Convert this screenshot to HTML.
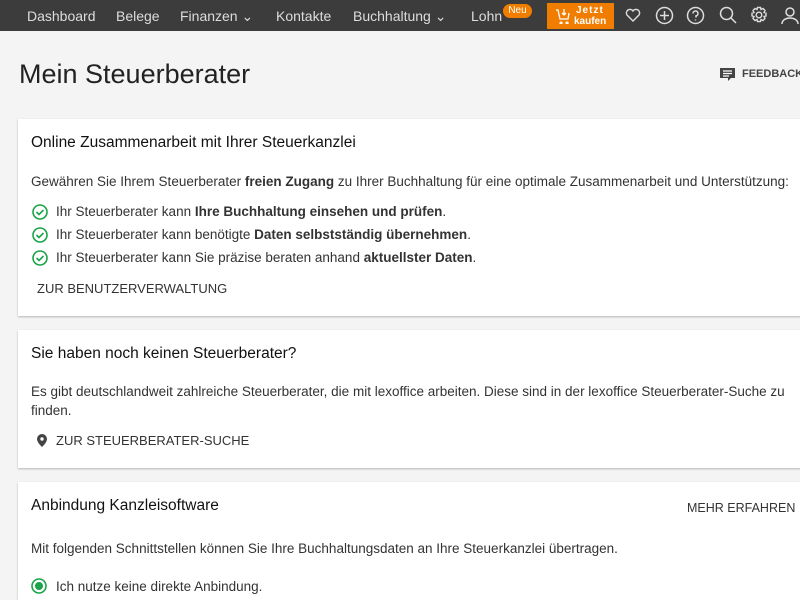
<!DOCTYPE html>
<html><head><meta charset="utf-8"><style>
*{margin:0;padding:0;box-sizing:border-box}
html,body{width:800px;height:600px;overflow:hidden}
body{background:#f4f4f4;font-family:"Liberation Sans",sans-serif;color:#222;position:relative}
.nav{position:absolute;top:0;left:0;width:800px;height:31px;background:#3c3c3c;color:#ddd;font-size:14px}
.nav span{position:absolute;top:8px}
.buy{position:absolute;left:547px;top:3px;width:67px;height:26px;background:#f07d00;color:#fff;font-weight:bold;font-size:10px;line-height:10px}
.neu{position:absolute;left:503px;top:4px;width:29px;height:14px;background:#f07d00;border-radius:7px;color:#fff;font-size:10px;text-align:center;line-height:14px}
.ic{position:absolute;top:6px}
h1{position:absolute;left:19px;top:59px;font-size:27px;font-weight:normal;color:#222}
.fb{position:absolute;left:742px;top:68px;font-size:11px;font-weight:bold;color:#444}
.card{position:absolute;left:18px;width:800px;background:#fff;box-shadow:0 1px 2px rgba(0,0,0,.25)}
.card h2{position:absolute;left:13px;font-size:15.5px;font-weight:normal;color:#111}
.t{position:absolute;left:13px;font-size:13.5px;color:#333}
.li{position:absolute;left:38px;font-size:13.5px;color:#333}
.chk{position:absolute;left:14px}
.lnk{position:absolute;font-size:13px;color:#333}
</style></head><body>
<div class="nav">
<span style="left:27px">Dashboard</span>
<span style="left:116px">Belege</span>
<span style="left:180px">Finanzen ⌄</span>
<span style="left:276px">Kontakte</span>
<span style="left:353px">Buchhaltung ⌄</span>
<span style="left:471px">Lohn</span>
<div class="neu">Neu</div>
<div class="buy"><svg style="position:absolute;left:8px;top:5px" width="16" height="16" viewBox="0 0 16 16" fill="none" stroke="#fff" stroke-width="1.3"><path d="M1 2h2l2 9h8l1-6M6 14a1 1 0 1 0 .1 0M12 14a1 1 0 1 0 .1 0M9 1v6M7 5l2 2 2-2"/></svg><div style="position:absolute;left:29px;top:3px;letter-spacing:1px">Jetzt</div><div style="position:absolute;left:27px;top:14px">kaufen</div></div>
<svg class="ic" style="left:624px" width="18" height="18" viewBox="0 0 18 18" fill="none" stroke="#ddd" stroke-width="1.4"><path d="M9 15L3 9a3.3 3.3 0 0 1 6-4 3.3 3.3 0 0 1 6 4z"/></svg>
<svg class="ic" style="left:655px" width="19" height="19" viewBox="0 0 19 19" fill="none" stroke="#ddd" stroke-width="1.5"><circle cx="9.5" cy="9.5" r="8"/><path d="M9.5 5v9M5 9.5h9"/></svg>
<svg class="ic" style="left:686px" width="19" height="19" viewBox="0 0 19 19" fill="none" stroke="#ddd" stroke-width="1.5"><circle cx="9.5" cy="9.5" r="8"/><path d="M7 7.5a2.5 2.5 0 1 1 3 2.4v1.6M9.5 13.5v1"/></svg>
<svg class="ic" style="left:719px" width="18" height="19" viewBox="0 0 18 19" fill="none" stroke="#ddd" stroke-width="1.5"><circle cx="7.5" cy="7.5" r="6"/><path d="M12 12l5 5"/></svg>
<svg class="ic" style="left:750px" width="18" height="18" viewBox="0 0 18 18" fill="none" stroke="#ddd" stroke-width="1.4"><circle cx="9" cy="9" r="2.8"/><path d="M7.5 1.5h3l.5 2 2-1 2 2-1 2 2 .5v3l-2 .5 1 2-2 2-2-1-.5 2h-3l-.5-2-2 1-2-2 1-2-2-.5v-3l2-.5-1-2 2-2 2 1z"/></svg>
<svg class="ic" style="left:781px" width="18" height="19" viewBox="0 0 18 19" fill="none" stroke="#ddd" stroke-width="1.5"><circle cx="9" cy="6" r="4"/><path d="M1 18c0-4 4-6 8-6s8 2 8 6"/></svg>
</div>
<h1>Mein Steuerberater</h1>
<svg style="position:absolute;left:719px;top:67px" width="17" height="16" viewBox="0 0 17 16"><path d="M1 1h15v10h-4l-3 3v-3H1z" fill="#444"/><path d="M4 4h9M4 6.5h9M4 9h6" stroke="#fff" stroke-width="1.2"/></svg>
<div class="fb">FEEDBACK</div>

<div class="card" style="top:119px;height:197px">
<h2 style="top:15px">Online Zusammenarbeit mit Ihrer Steuerkanzlei</h2>
<div class="t" style="top:55px">Gewähren Sie Ihrem Steuerberater <b>freien Zugang</b> zu Ihrer Buchhaltung für eine optimale Zusammenarbeit und Unterstützung:</div>
<svg class="chk" style="top:85px" width="16" height="16" viewBox="0 0 16 16" fill="none" stroke="#1aa349" stroke-width="1.6"><circle cx="8" cy="8" r="7"/><path d="M4.5 8l2.5 2.5 4.5-4.5"/></svg>
<div class="li" style="top:85px">Ihr Steuerberater kann <b>Ihre Buchhaltung einsehen und prüfen</b>.</div>
<svg class="chk" style="top:108px" width="16" height="16" viewBox="0 0 16 16" fill="none" stroke="#1aa349" stroke-width="1.6"><circle cx="8" cy="8" r="7"/><path d="M4.5 8l2.5 2.5 4.5-4.5"/></svg>
<div class="li" style="top:108px">Ihr Steuerberater kann benötigte <b>Daten selbstständig übernehmen</b>.</div>
<svg class="chk" style="top:131px" width="16" height="16" viewBox="0 0 16 16" fill="none" stroke="#1aa349" stroke-width="1.6"><circle cx="8" cy="8" r="7"/><path d="M4.5 8l2.5 2.5 4.5-4.5"/></svg>
<div class="li" style="top:131px">Ihr Steuerberater kann Sie präzise beraten anhand <b>aktuellster Daten</b>.</div>
<div class="lnk" style="left:19px;top:162px">ZUR BENUTZERVERWALTUNG</div>
</div>

<div class="card" style="top:330px;height:138px">
<h2 style="top:15px">Sie haben noch keinen Steuerberater?</h2>
<div class="t" style="top:52px;width:770px;line-height:19px">Es gibt deutschlandweit zahlreiche Steuerberater, die mit lexoffice arbeiten. Diese sind in der lexoffice Steuerberater-Suche zu finden.</div>
<svg style="position:absolute;left:19px;top:104px" width="10" height="13" viewBox="0 0 10 13"><path d="M5 0a5 5 0 0 0-5 5c0 3.5 5 8 5 8s5-4.5 5-8a5 5 0 0 0-5-5z" fill="#444"/><circle cx="5" cy="5" r="1.7" fill="#fff"/></svg>
<div class="lnk" style="left:38px;top:103px">ZUR STEUERBERATER-SUCHE</div>
</div>

<div class="card" style="top:482px;height:118px">
<h2 style="top:15px">Anbindung Kanzleisoftware</h2>
<div class="lnk" style="left:669px;top:19px;font-size:12.5px">MEHR ERFAHREN</div>
<div class="t" style="top:59px">Mit folgenden Schnittstellen können Sie Ihre Buchhaltungsdaten an Ihre Steuerkanzlei übertragen.</div>
<svg style="position:absolute;left:13px;top:96px" width="16" height="16" viewBox="0 0 16 16"><circle cx="8" cy="8" r="7" fill="none" stroke="#1aa349" stroke-width="1.6"/><circle cx="8" cy="8" r="4" fill="#1aa349"/></svg>
<div class="li" style="top:97px">Ich nutze keine direkte Anbindung.</div>
</div>
</body></html>
